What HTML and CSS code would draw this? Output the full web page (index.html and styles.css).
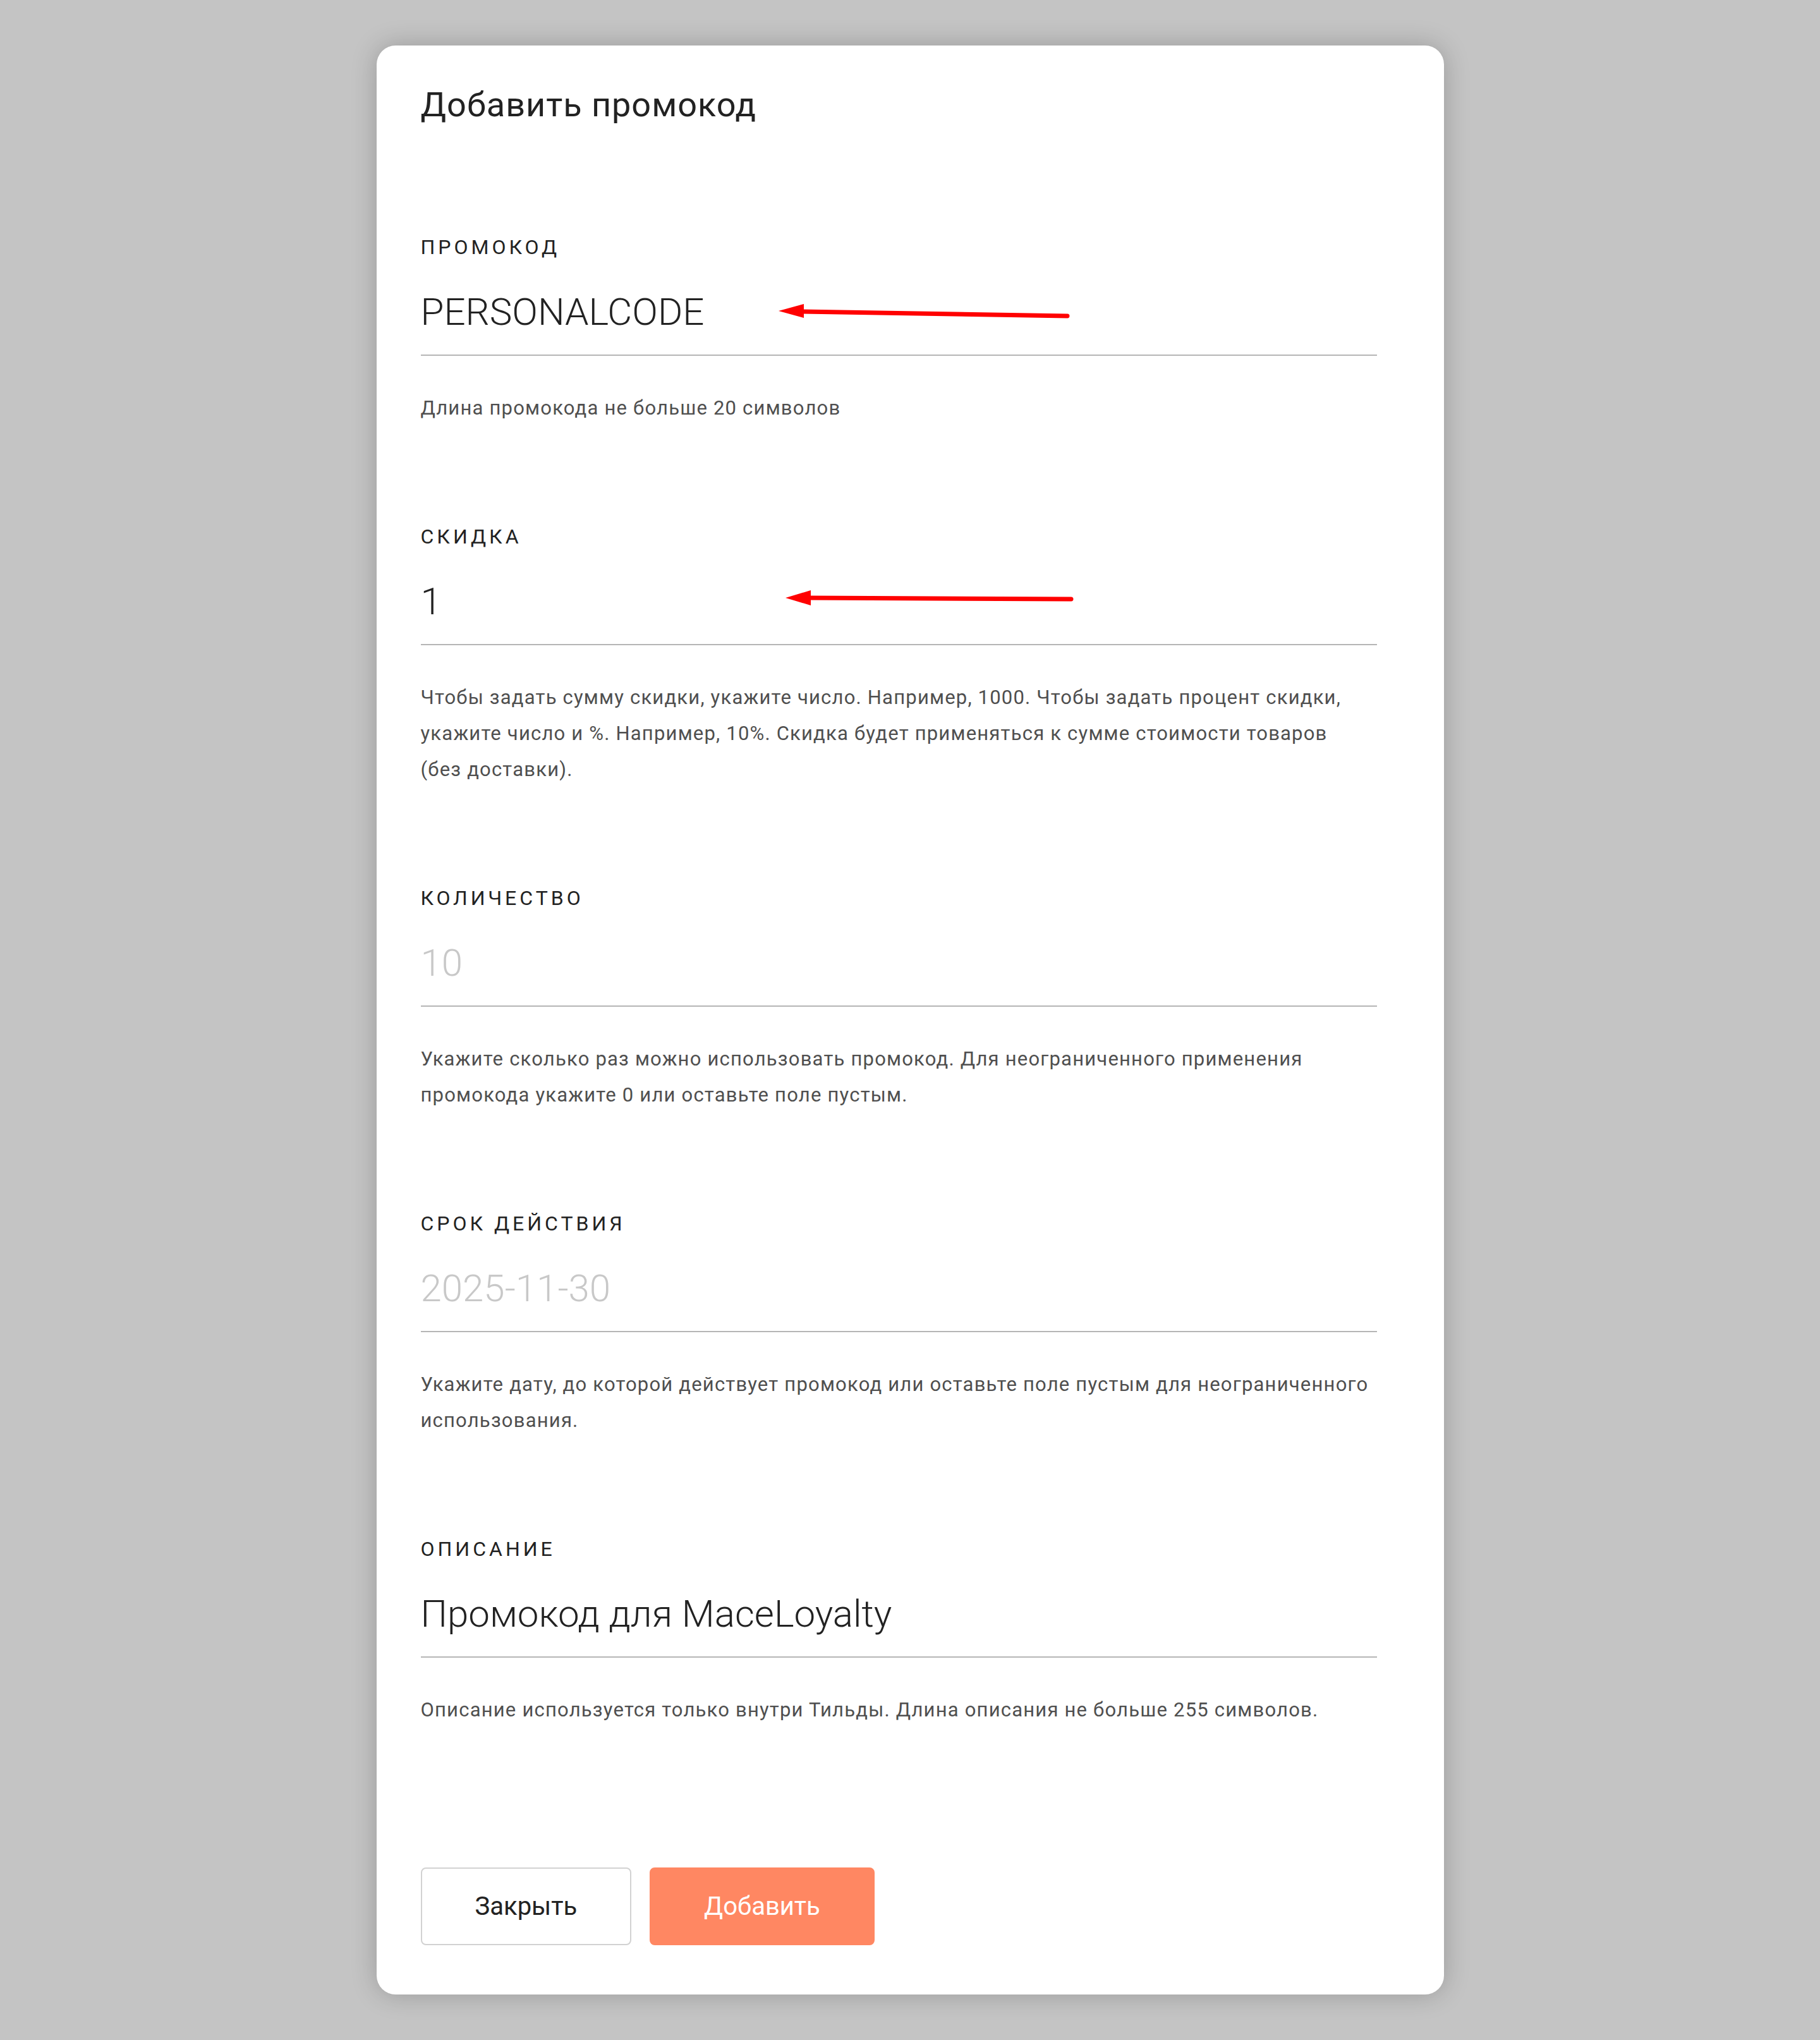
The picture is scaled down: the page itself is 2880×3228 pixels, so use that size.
FILE: index.html
```html
<!DOCTYPE html>
<html lang="ru">
<head>
    <meta charset="UTF-8">
    <meta name="viewport" content="width=device-width, initial-scale=1.0">
    <title>Добавить промокод</title>
    <link rel="stylesheet" href="styles.css">
</head>
<body>
    <div class="popup">
        <h1 class="popup-title">Добавить промокод</h1>
        <form class="promo-form">
            <div class="field">
                <label class="field-label" for="promo-code">Промокод</label>
                <input class="field-input" id="promo-code" type="text" value="PERSONALCODE">
                <p class="field-hint">Длина промокода не больше 20 символов</p>
            </div>
            <div class="field">
                <label class="field-label" for="promo-discount">Скидка</label>
                <input class="field-input" id="promo-discount" type="text" value="1">
                <p class="field-hint">Чтобы задать сумму скидки, укажите число. Например, 1000. Чтобы задать процент скидки, укажите число и %. Например, 10%. Скидка будет применяться к сумме стоимости товаров (без&nbsp;доставки).</p>
            </div>
            <div class="field">
                <label class="field-label" for="promo-count">Количество</label>
                <input class="field-input" id="promo-count" type="text" placeholder="10">
                <p class="field-hint">Укажите сколько раз можно использовать промокод. Для неограниченного применения промокода укажите 0 или оставьте поле пустым.</p>
            </div>
            <div class="field">
                <label class="field-label" for="promo-date">Срок действия</label>
                <input class="field-input" id="promo-date" type="text" placeholder="2025-11-30">
                <p class="field-hint">Укажите дату, до которой действует промокод или оставьте поле пустым для неограниченного использования.</p>
            </div>
            <div class="field">
                <label class="field-label" for="promo-descr">Описание</label>
                <input class="field-input" id="promo-descr" type="text" value="Промокод для MaceLoyalty">
                <p class="field-hint">Описание используется только внутри Тильды. Длина описания не больше 255 символов.</p>
            </div>
            <div class="buttons">
                <button type="button" class="btn btn-close">Закрыть</button>
                <button type="submit" class="btn btn-add">Добавить</button>
            </div>
        </form>

        <!-- красные стрелки-пометки поверх формы -->
        <svg class="mark mark-code" width="470" height="35" viewBox="1225 475 470 35">
            <polygon points="1231,492 1271,481 1271,503" fill="#ff0000"/>
            <line x1="1266" y1="493" x2="1688" y2="500" stroke="#ff0000" stroke-width="7" stroke-linecap="round"/>
        </svg>
        <svg class="mark mark-discount" width="470" height="35" viewBox="1235 928 470 35">
            <polygon points="1242,946 1282,934 1282,958" fill="#ff0000"/>
            <line x1="1277" y1="946" x2="1694" y2="948" stroke="#ff0000" stroke-width="7" stroke-linecap="round"/>
        </svg>
    </div>
</body>
</html>
```

FILE: styles.css
```css
body {
    margin: 0;
    padding: 72px 0 71px;
    background-color: #c4c4c4;
    font-family: Roboto, "Noto Sans", sans-serif;
    color: #222;
}
.popup {
    position: relative;
    width: 1689px;
    margin: 0 auto;
    box-sizing: border-box;
    padding: 62px 106px 78px 70px;
    background: #fff;
    border-radius: 30px;
    box-shadow: 0 0 40px rgba(0,0,0,0.22);
}
.popup-title {
    margin: 0 0 175px;
    font-size: 54px;
    line-height: 64px;
    font-weight: 400;
    letter-spacing: 1px;
    color: #222;
}
.field + .field {
    margin-top: 157px;
}
.field-label {
    display: block;
    font-size: 32px;
    line-height: 36px;
    letter-spacing: 5px;
    text-transform: uppercase;
    color: #222;
}
.field-input {
    display: block;
    width: 100%;
    box-sizing: content-box;
    height: 80px;
    margin-top: 44px;
    padding: 0 0 28px;
    border: none;
    border-bottom: 2px solid #b5b5b5;
    outline: none;
    font-family: inherit;
    font-size: 60px;
    font-weight: 300;
    color: #222;
    background: transparent;
}
.field-input::placeholder {
    color: #c8c8c8;
}
.field-hint {
    margin: 54px 0 0;
    font-size: 31px;
    line-height: 57px;
    letter-spacing: 1.2px;
    color: #4f4f4f;
}
.buttons {
    display: flex;
    gap: 29px;
    margin-top: 221px;
}
.btn {
    height: 123px;
    padding: 0 84px;
    border-radius: 8px;
    font-family: inherit;
    font-size: 40px;
    cursor: pointer;
}
.btn-close {
    background: #fff;
    border: 2px solid #d2d2d2;
    color: #222;
}
.btn-add {
    background-color: #ff8762;
    border: 2px solid #ff8762;
    color: #fff;
}
.mark {
    position: absolute;
    pointer-events: none;
}
.mark-code {
    left: 630px;
    top: 403px;
}
.mark-discount {
    left: 640px;
    top: 856px;
}
```
